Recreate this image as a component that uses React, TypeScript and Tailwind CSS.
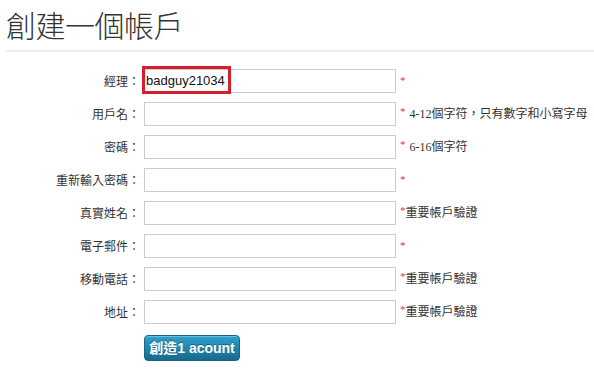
import React from "react";

const cjk = '"Liberation Sans", "Noto Sans CJK TC", sans-serif';
const serifCjk = '"Liberation Serif", "Noto Sans CJK TC", serif';

type Row = { label: string; hint?: React.ReactNode; value?: string };

const rows: Row[] = [
  { label: "經理", value: "badguy21034" },
  {
    label: "用戶名",
    hint: (
      <>
        <span className="ml-[4px]">4-12</span>個字符，只有數字和小寫字母
      </>
    ),
  },
  {
    label: "密碼",
    hint: (
      <>
        <span className="ml-[4px]">6-16</span>個字符
      </>
    ),
  },
  { label: "重新輸入密碼" },
  { label: "真實姓名", hint: <>重要帳戶驗證</> },
  { label: "電子郵件" },
  { label: "移動電話", hint: <>重要帳戶驗證</> },
  { label: "地址", hint: <>重要帳戶驗證</> },
];

export default function App() {
  return (
    <div className="w-[594px] h-[370px] bg-white overflow-hidden pl-[6px]" style={{ fontFamily: cjk }}>
      <h1
        className="pt-[6px] h-[50px] text-[30px] leading-[36px] font-light text-[#333] tracking-[-0.5px]"
        style={{ fontFamily: '"Noto Sans CJK TC", sans-serif' }}
      >
        創建一個帳戶
      </h1>
      <div className="h-[2px] bg-[#eeeeee]" />
      <div className="flex flex-col gap-[9px] pt-[17px]">
        {rows.map((r, i) => (
          <div key={i} className="flex items-center h-[24px]">
            <div className="w-[134px] text-right text-[12px] text-[#333]" style={{ fontFamily: '"Noto Sans CJK TC", sans-serif' }}>
              {r.label}：
            </div>
            <div className="relative ml-[4px]">
              <div className="w-[252px] h-[24px] border border-[#cccccc] bg-white flex items-center pl-[1px]">
                {r.value && (
                  <span className="text-[13px] text-[#111]" style={{ fontFamily: '"Liberation Sans", Arial, sans-serif' }}>
                    {r.value}
                  </span>
                )}
              </div>
              {r.value && (
                <div className="absolute left-[-2px] top-[-3px] w-[89px] h-[28px] border-[3px] border-[#d71f2c]" />
              )}
            </div>
            <div className="ml-[4px] flex items-center text-[12px] text-[#444]" style={{ fontFamily: serifCjk }}>
              <span className="text-[#b94a48] text-[11px] self-start mt-[-2px]">*</span>
              {r.hint && (
                <span className="text-[12px] text-[#333]" style={{ fontFamily: '"Liberation Serif", "Noto Sans CJK TC", serif' }}>
                  {r.hint}
                </span>
              )}
            </div>
          </div>
        ))}
        <div className="pl-[138px] pt-[2px]">
          <button
            className="w-[96px] h-[26px] rounded-[4px] border border-[#1b6482] bg-gradient-to-b from-[#2ba3cf] to-[#176a8c] text-white font-bold text-[14px] leading-[24px] shadow-[inset_0_1px_0_rgba(255,255,255,0.3)]"
            style={{ fontFamily: '"Liberation Sans", "Noto Sans CJK TC", sans-serif', textShadow: "0 -1px 0 rgba(0,0,0,0.35)" }}
          >
            創造1 acount
          </button>
        </div>
      </div>
    </div>
  );
}
